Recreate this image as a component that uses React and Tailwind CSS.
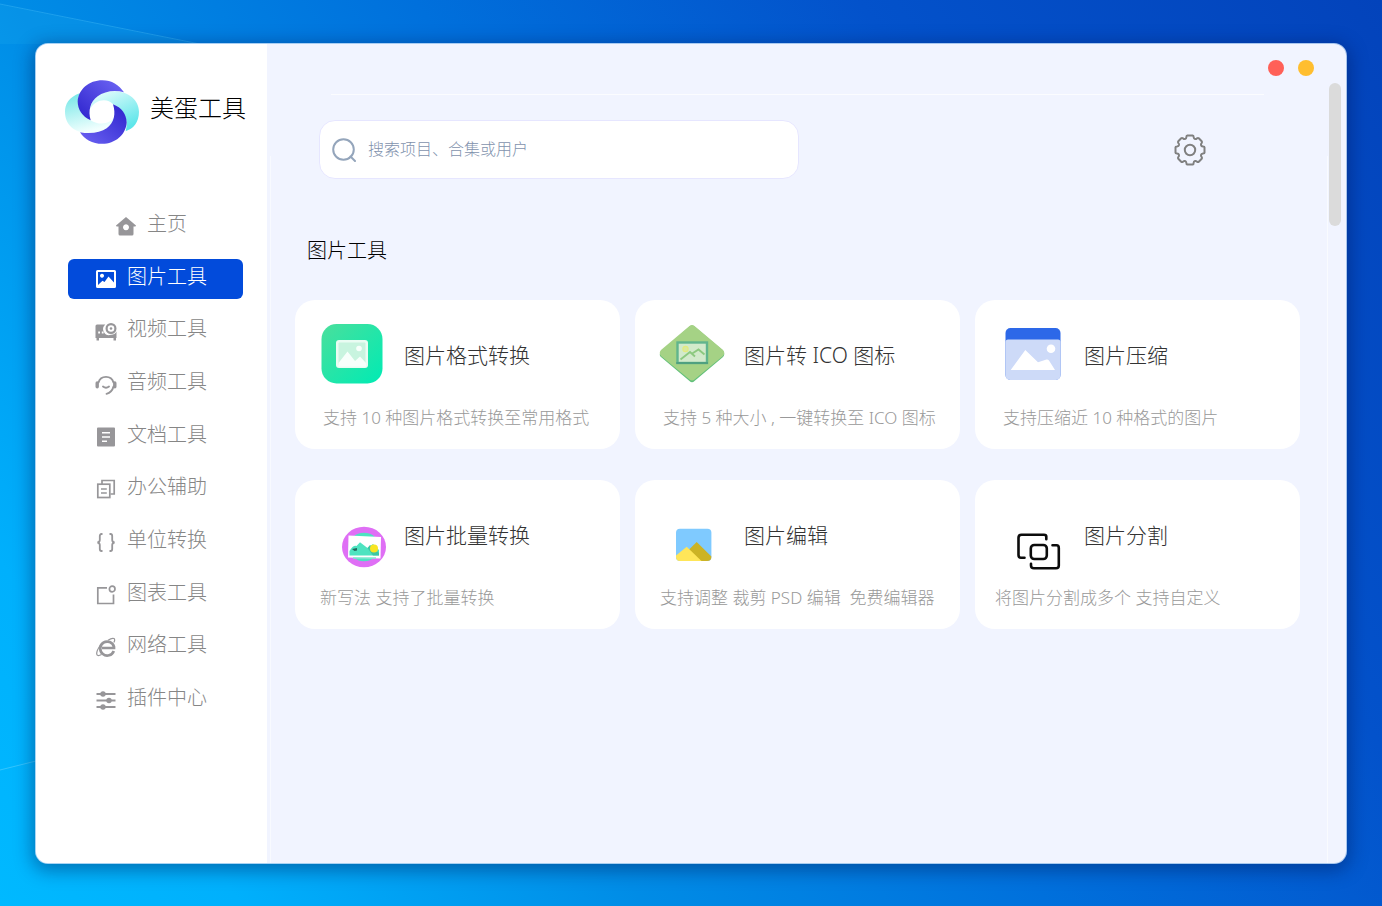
import React from 'react';

const navIcons = {
  home: (
    <path fillRule="evenodd" d="M10 1 L20 9.6 Q20 10.6 19 10.6 H17.5 V18 Q17.5 19.5 16 19.5 H4 Q2.5 19.5 2.5 18 V10.6 H1 Q0 10.6 0 9.6 Z M10 8.2 a3 3 0 1 0 0.01 0 Z" />
  ),
  image: (
    <path fillRule="evenodd" d="M1.5 1 H18.5 Q20 1 20 2.5 V17.5 Q20 19 18.5 19 H1.5 Q0 19 0 17.5 V2.5 Q0 1 1.5 1 Z M2 3 V16 L6.5 11.8 L8.5 13 L12.5 7.5 L18 13.5 V3 Z M6 4.8 a2 2 0 1 0 0.01 0 Z" />
  ),
  video: (
    <>
      <path d="M1 3.5 H9.3 A6 6 0 0 0 15 13.8 A6 6 0 0 0 20.5 10.500 V17 H20 V19.500 H17.500 V17 H3 V19.500 H0.500 V17 H-0.500 V5 Q-0.500 3.500 1 3.500 Z" />
      <path d="M2.200 11.500 H4 M5.800 11.500 H7.600" stroke="#fff" strokeWidth="1.800" />
      <circle cx="15" cy="7.500" r="4.400" fill="none" stroke="currentColor" strokeWidth="2.200" />
      <circle cx="15" cy="7.500" r="1.300" />
    </>
  ),
  audio: (
    <g fill="none" stroke="currentColor" strokeWidth="1.900" strokeLinecap="round">
      <path d="M2.500 8.500 A7.800 7.800 0 0 1 17.500 8.500" />
      <path d="M17.500 12.500 Q16 18.500 10.500 19.800" />
      <path d="M7 12.500 Q10 14.800 13 12.500" />
      <path d="M1.200 9 V12.800 M18.800 9 V12.800" strokeWidth="3.400" />
    </g>
  ),
  doc: (
    <path fillRule="evenodd" d="M2 0.5 H18 Q19 0.5 19 1.5 V18.5 Q19 19.5 18 19.5 H2 Q1 19.5 1 18.5 V1.5 Q1 0.5 2 0.5 Z M6 5 V6.6 H14 V5 Z M6 9.2 V10.8 H14 V9.2 Z M6 13.4 V15 H11 V13.4 Z" />
  ),
  office: (
    <g fill="none" stroke="currentColor" strokeWidth="1.7">
      <path d="M6 5 V1.5 H18.2 V15 H14.5" />
      <rect x="1.8" y="5.2" width="12" height="13.3" />
      <path d="M5 10 H10.8 M5 14 H10.8" />
    </g>
  ),
  unit: (
    <g fill="none" stroke="currentColor" strokeWidth="1.8">
      <path d="M6.5 2 H5.5 Q3.8 2 3.8 4 V8 Q3.8 10 1.5 10.5 Q3.8 11 3.8 13 V17 Q3.8 19 5.5 19 H6.5" />
      <path d="M13.5 2 H14.5 Q16.2 2 16.2 4 V8 Q16.2 10 18.5 10.5 Q16.2 11 16.2 13 V17 Q16.2 19 14.5 19 H13.5" />
    </g>
  ),
  chart: (
    <g fill="none" stroke="currentColor" strokeWidth="1.7">
      <path d="M11 2.8 H1.8 V18.5 H17.5 V9.5" />
      <circle cx="16.2" cy="4" r="2.8" />
    </g>
  ),
  network: (
    <g fill="none" stroke="currentColor">
      <path d="M17.8 14 A7 7 0 1 1 18 9.8 V11 H6" strokeWidth="2.7" />
      <path d="M4.5 8 C-0.5 15 -1 21 5.5 17.5 M12 3.2 C18 -0.6 20 2 17.8 5.5" strokeWidth="1.2" />
    </g>
  ),
  plugin: (
    <>
      <path d="M0.5 4 H19.5 M0.5 10.5 H19.5 M0.5 17 H19.5" fill="none" stroke="currentColor" strokeWidth="1.9" />
      <circle cx="7" cy="4" r="2.7" />
      <circle cx="13" cy="10.5" r="2.7" />
      <circle cx="7" cy="17" r="2.7" />
    </>
  ),
};

const navItems = [
  { icon: 'home', label: '主页' },
  { icon: 'image', label: '图片工具' },
  { icon: 'video', label: '视频工具' },
  { icon: 'audio', label: '音频工具' },
  { icon: 'doc', label: '文档工具' },
  { icon: 'office', label: '办公辅助' },
  { icon: 'unit', label: '单位转换' },
  { icon: 'chart', label: '图表工具' },
  { icon: 'network', label: '网络工具' },
  { icon: 'plugin', label: '插件中心' },
];

const toolIcons = {
  convert: (
    <>
      <defs>
        <linearGradient id="green" x1="0" y1="0" x2="1" y2="1">
          <stop offset="0" stopColor="#4adf9c" />
          <stop offset="1" stopColor="#00ebb4" />
        </linearGradient>
      </defs>
      <rect x="6.5" y="11" width="61" height="59.5" rx="15" fill="url(#green)" />
      <rect x="21" y="27" width="32" height="28" rx="3" fill="#eafcf3" />
      <rect x="23.5" y="29.5" width="27" height="23" rx="1" fill="#c8f4df" />
      <path d="M23.5 50 L32.5 38.5 L40 48 L45 43.5 L51 50 V53.5 H23.5 Z" fill="#f7fffb" />
      <circle cx="44" cy="35.5" r="2.8" fill="#f7fffb" />
    </>
  ),
  ico: (
    <>
      <path d="M34.5 13.5 Q37 11.5 39.5 13.5 L68 37.5 Q70.5 42 68 44 L39.5 68 Q37 70.5 34.5 68 L6 44 Q3.5 42 6 38.5 Z" fill="#61c07a" />
      <path d="M34.5 13 Q37 11 39.5 13 L68 37 Q70.5 40 68 43 L39.5 66.5 Q37 68.5 34.5 66.5 L6 43 Q3.5 40 6 37 Z" fill="#a5d285" />
      <rect x="22.5" y="29.5" width="29.5" height="20.5" fill="#d2eacb" stroke="#61b58d" strokeWidth="2.4" />
      <path d="M21.3 50 H53" stroke="#4fa080" strokeWidth="2" />
      <path d="M25.5 46.5 L35 39 L40 43.5 M36.5 41 L43.5 36.5 L49.5 41.5" fill="none" stroke="#8cc97f" strokeWidth="1.9" />
      <circle cx="30.5" cy="36" r="2.6" fill="#d9e9a0" stroke="#e3eb7d" strokeWidth="1.2" />
    </>
  ),
  compress: (
    <>
      <rect x="10.5" y="15" width="55" height="52" rx="5" fill="#2d68e8" />
      <path d="M10.5 29 Q10.5 26.5 13 26.5 H63 Q65.5 26.5 65.5 29 V62 Q65.5 67 60.5 67 H15.5 Q10.5 67 10.5 62 Z" fill="#cddaf8" />
      <path d="M15.7 57 L30.3 37 L43 49.3 L51.5 46.5 Q53 46.2 54 47.5 L60 57 Z" fill="#fff" />
      <circle cx="56" cy="35.7" r="4.3" fill="#fff" />
    </>
  ),
  batch: (
    <>
      <ellipse cx="49" cy="54" rx="22" ry="20.3" fill="#df6ff5" />
      <ellipse cx="49" cy="54" rx="15.5" ry="14.3" fill="#4ee3c0" />
      <path d="M33.5 42.5 L66 44 L65.5 65.5 L33 64.5 Z" fill="#fff" />
      <path d="M34.5 58 Q38 52 41.5 53 L45 49.3 L52.5 55 L58 51 L64 57 V62.5 H34.5 Z" fill="#4ee3c0" />
      <path d="M52.5 55 L55 52 L64 60 V62.5 H58 Z" fill="#3cc7a4" />
      <circle cx="59" cy="55.5" r="4" fill="#f8e522" />
      <path d="M37 56 L42 55 V57.5 L39.5 58 Z" fill="#23675c" />
      <path d="M38 65 H61" stroke="#7fe9d0" strokeWidth="1.5" />
    </>
  ),
  edit: (
    <>
      <rect x="21" y="35.7" width="35.4" height="32.3" rx="4" fill="#7fcaff" />
      <path d="M28 62.5 L41.7 49 L56.4 63.5 Q56.4 68 52 68 H42 Z" fill="#ccb325" />
      <path d="M21 62.5 L31.7 53.7 L46.5 68 H25 Q21 68 21 63.5 Z" fill="#ffe659" />
    </>
  ),
  split: (
    <g fill="none" stroke="#0c0c0c" strokeWidth="2.6" strokeLinecap="round">
      <path d="M51.3 46.3 V43.5 Q51.3 41.8 49 41.8 H26.5 Q23.5 41.8 23.5 44.8 V62 Q23.5 64.800 26 64.800 H29.500" />
      <path d="M57.5 52.3 H61.5 Q63.8 52.3 63.8 55 V72.5 Q63.8 75.300 61 75.300 H39 Q36 75.300 36 72.500 V70.800" />
      <rect x="35.8" y="52" width="16" height="14" rx="3.5" />
    </g>
  ),
};

const tools = [
  { icon: 'convert', title: '图片格式转换', desc: '支持 10 种图片格式转换至常用格式', pad: 'pl-7' },
  { icon: 'ico', title: '图片转 ICO 图标', desc: '支持 5 种大小 , 一键转换至 ICO 图标', pad: 'pl-7' },
  { icon: 'compress', title: '图片压缩', desc: '支持压缩近 10 种格式的图片', pad: 'pl-7' },
  { icon: 'batch', title: '图片批量转换', desc: '新写法 支持了批量转换', pad: 'pl-[25px]' },
  { icon: 'edit', title: '图片编辑', desc: '支持调整 裁剪 PSD 编辑  免费编辑器', pad: 'pl-[25px]' },
  { icon: 'split', title: '图片分割', desc: '将图片分割成多个 支持自定义', pad: 'pl-5' },
];

function Logo() {
  return (
    <svg viewBox="88 108 222 191" className="h-16 w-[74px] shrink-0" aria-hidden="true">
      <defs>
        <linearGradient id="blueTop" x1="1" y1="0" x2="0" y2="1">
          <stop offset="0" stopColor="#7068f5" />
          <stop offset="1" stopColor="#2c22cc" />
        </linearGradient>
        <linearGradient id="blueBottom" x1="1" y1="0" x2="0" y2="1">
          <stop offset="0" stopColor="#2c22cc" />
          <stop offset="1" stopColor="#6c64f3" />
        </linearGradient>
        <linearGradient id="cyanLeft" x1="0" y1="0" x2="0.3" y2="1">
          <stop offset="0" stopColor="#6fe6e6" />
          <stop offset="1" stopColor="#f1fffe" />
        </linearGradient>
        <linearGradient id="cyanRight" x1="0" y1="0" x2="0.6" y2="1">
          <stop offset="0" stopColor="#f1fffe" />
          <stop offset="1" stopColor="#5fe6ea" />
        </linearGradient>
      </defs>
      <path d="M132 147 C100 158 88 180 88 203 C88 245 120 267 160 267 C205 267 230 245 236 218 C225 240 190 245 165 228 C135 215 120 180 132 147 Z" fill="url(#cyanLeft)" />
      <path d="M163 195 C168 160 195 141 235 141 C280 141 310 168 310 203 C310 235 292 255 270 261 C280 225 265 195 232 180 C215 160 178 165 163 195 Z" fill="url(#cyanRight)" />
      <path d="M165 228 C140 218 126 195 126 172 C128 135 160 108 200 108 C228 108 250 122 265 144 C235 136 205 142 186 156 C163 173 157 200 165 228 Z" fill="url(#blueTop)" />
      <path d="M232 180 C258 190 273 210 273 235 C271 272 238 299 200 299 C170 299 146 285 133 264 C165 270 195 265 213 252 C236 235 241 208 232 180 Z" fill="url(#blueBottom)" />
    </svg>
  );
}

// Eight-tooth outline built around a 32px box
function GearIcon() {
  return (
    <svg viewBox="0 0 32 32" className="size-8" fill="none" stroke="#808080" strokeWidth="2" strokeLinejoin="round" aria-hidden="true">
      <path d="M13.2 1.5 H18.8 Q19.600 1.500 19.600 3 Q19.800 4.700 21 5 Q22 5.200 22.900 4.400 Q24 3.600 24.800 4.300 L27.700 7.200 Q28.400 8 27.600 9.100 Q26.800 10 27 11 Q27.300 12.400 29 12.400 Q30.500 12.400 30.500 13.200 V18.800 Q30.500 19.600 29 19.600 Q27.300 19.800 27 21 Q26.800 22 27.600 22.900 Q28.400 24 27.700 24.800 L24.800 27.700 Q24 28.400 22.900 27.600 Q22 26.800 21 27 Q19.600 27.300 19.600 29 Q19.600 30.500 18.800 30.500 H13.200 Q12.400 30.500 12.400 29 Q12.200 27.300 11 27 Q10 26.800 9.100 27.600 Q8 28.400 7.200 27.700 L4.300 24.800 Q3.600 24 4.400 22.900 Q5.200 22 5 21 Q4.700 19.600 3 19.600 Q1.500 19.600 1.500 18.800 V13.200 Q1.500 12.400 3 12.400 Q4.700 12.200 5 11 Q5.200 10 4.400 9.100 Q3.600 8 4.300 7.200 L7.200 4.300 Q8 3.600 9.100 4.400 Q10 5.200 11 5 Q12.400 4.700 12.400 3 Q12.400 1.500 13.200 1.500 Z" />
      <circle cx="16" cy="16" r="5.2" />
    </svg>
  );
}

function Sidebar({ active, onSelect }) {
  return (
    <aside className="flex w-[231px] shrink-0 flex-col bg-white">
      <div className="flex items-center gap-[11px] pt-9 pl-[29px]">
        <Logo />
        <span className="pb-2 text-2xl font-light whitespace-nowrap text-black">美蛋工具</span>
      </div>
      <nav className="mt-[62px] mr-6 ml-8 flex h-[514px] flex-col justify-between">
        {navItems.map((item) => (
          <button
            key={item.label}
            type="button"
            onClick={() => onSelect(item.label)}
            className={`flex h-10 items-center justify-center gap-[11px] rounded-md pr-2 text-xl font-light ${
              active === item.label ? 'bg-[#024bdb] text-white' : 'text-[#868686]'
            }`}
          >
            <svg
              viewBox="0 0 20 20"
              className={`size-5 overflow-visible ${active === item.label ? 'text-white' : 'text-[#979699]'}`}
              fill="currentColor"
              aria-hidden="true"
            >
              {navIcons[item.icon]}
            </svg>
            <span className="pb-1">{item.label}</span>
          </button>
        ))}
      </nav>
    </aside>
  );
}

function ToolCard({ tool }) {
  return (
    <a href="#" className="block h-[149px] rounded-[20px] bg-white pt-[13px]">
      <div className="flex items-center gap-[5px] pl-5">
        <svg viewBox="0 0 84 84" className="size-[84px] shrink-0" aria-hidden="true">
          {toolIcons[tool.icon]}
        </svg>
        <h3 className="text-[21px] leading-6 font-light whitespace-nowrap text-[#333]">{tool.title}</h3>
      </div>
      <p className={`mt-[9px] text-[17px] leading-6 font-light whitespace-pre text-[#999] ${tool.pad}`}>{tool.desc}</p>
    </a>
  );
}

export default function App() {
  const [active, setActive] = React.useState('图片工具');

  return (
    <div className="relative flex min-h-screen bg-[linear-gradient(55deg,#00b9ff_0%,#00b0fc_12%,#008ce6_32%,#0070dc_52%,#0352cb_74%,#0343bb_100%)] px-9 pt-11 pb-[43px] font-['Noto_Sans','Noto_Sans_CJK_SC',sans-serif]">
      {/* light rays on the desktop wallpaper */}
      <svg className="absolute top-0 left-0 h-[800px] w-[240px]" viewBox="0 0 240 800" fill="none" aria-hidden="true">
        <path d="M0 4 L200 44 H0 Z" fill="#20b4f0" opacity="0.18" />
        <path d="M0 4 L200 44" stroke="#4cc4f8" opacity="0.35" />
        <path d="M0 770 L40 760" stroke="#7fdcff" opacity="0.4" />
      </svg>

      <div className="relative flex flex-1 overflow-hidden rounded-xl bg-[#f1f4ff] shadow-[0_0_0_1px_rgba(210,232,255,0.8),0_4px_18px_4px_rgba(0,20,80,0.4)]">
        <Sidebar active={active} onSelect={setActive} />

        <main className="flex min-w-0 flex-1 flex-col pr-[46px] pl-7">
          <div className="-mr-4 flex h-12 items-center justify-end gap-[14px] pr-0.5">
            <button type="button" aria-label="关闭" className="size-4 rounded-full bg-[#ff6058]" />
            <button type="button" aria-label="最小化" className="size-4 rounded-full bg-[#ffbe2f]" />
          </div>
          <div className="mt-0.5 mr-9 ml-9 h-px bg-white/70" />

          <div className="mt-[25px] flex items-center justify-between pr-[94px] pl-6">
            <label className="flex h-[59px] w-full max-w-[480px] items-center gap-3 rounded-2xl border border-[#e6e6ff] bg-white px-3">
              <svg viewBox="0 0 24 24" className="size-6 shrink-0" fill="none" stroke="#94a5bb" strokeWidth="2" strokeLinecap="round" aria-hidden="true">
                <circle cx="11.5" cy="11.5" r="10.3" />
                <path d="M18.5 18.5 L23 23" />
              </svg>
              <input
                type="search"
                aria-label="搜索"
                placeholder="搜索项目、合集或用户"
                className="min-w-0 flex-1 pb-0.5 text-base font-light outline-none placeholder:text-[#7f92ad]"
              />
            </label>
            <button type="button" aria-label="设置">
              <GearIcon />
            </button>
          </div>

          <h2 className="mt-[58px] pl-3 text-xl leading-7 font-light text-black">图片工具</h2>

          <div className="mt-[35px] grid grid-cols-3 gap-x-[15px] gap-y-[31px]">
            {tools.map((tool) => (
              <ToolCard key={tool.title} tool={tool} />
            ))}
          </div>
        </main>

        <div className="absolute top-28 bottom-0 left-[234px] w-px bg-white/50" />
        <div className="absolute top-[39px] right-[5px] h-[143px] w-3 rounded-md bg-[#dbdbdb]" />
        <div className="absolute top-28 right-[18px] bottom-0 w-px bg-white/60" />
      </div>
    </div>
  );
}
